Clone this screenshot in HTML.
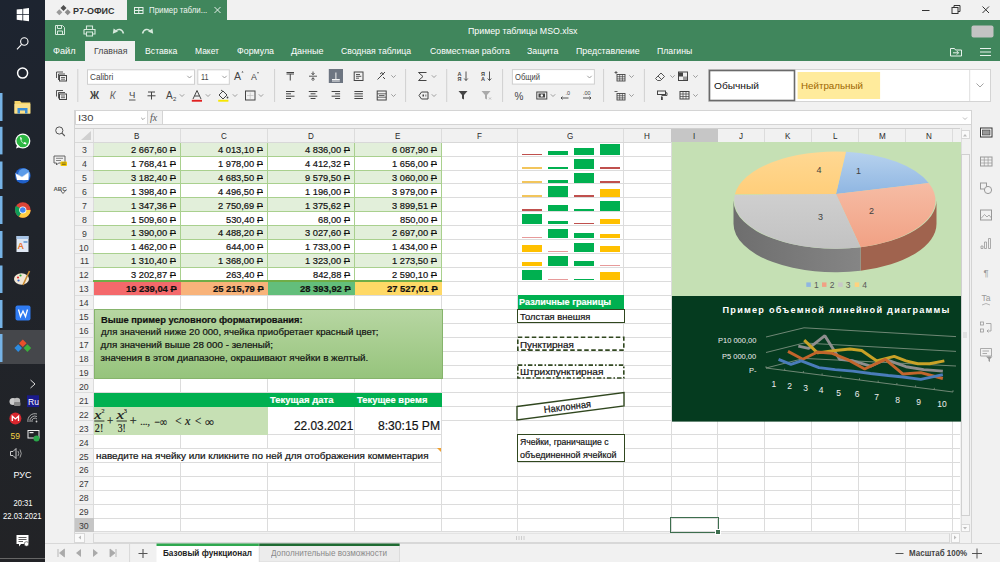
<!DOCTYPE html><html><head><meta charset="utf-8"><style>
*{margin:0;padding:0;box-sizing:border-box}
html,body{width:1000px;height:562px;overflow:hidden;background:#f1f1f1;font-family:"Liberation Sans",sans-serif}
.a{position:absolute}
.t{position:absolute;white-space:nowrap}
.k{-webkit-text-stroke:0.2px currentColor}
</style></head><body>
<div class="a" style="left:0px;top:0px;width:45px;height:562px;background:linear-gradient(#1d2430,#20242b 40%,#222326)"></div>
<div class="a" style="left:45px;top:0px;width:955px;height:20px;background:#f1f1f1"></div>
<div class="a" style="left:127px;top:0px;width:100px;height:20px;background:#40865c"></div>
<div class="a" style="left:45px;top:20px;width:955px;height:41px;background:#40865c"></div>
<div class="a" style="left:85px;top:41px;width:50px;height:20px;background:#f1f1f1"></div>
<div class="a" style="left:45px;top:61px;width:955px;height:49px;background:#f1f1f1"></div>
<div class="a" style="left:74.5px;top:110px;width:897px;height:15px;background:#fff;border:1px solid #d4d4d4"></div>
<div class="a" style="left:147px;top:110px;width:16px;height:15px;background:#f1f1f1;border:1px solid #d4d4d4"></div>
<div class="a" style="left:74px;top:110px;width:1px;height:433px;background:#d4d4d4"></div>
<div class="a" style="left:75px;top:128px;width:885px;height:404px;background:#fff"></div>
<div class="a" style="left:75px;top:128px;width:885px;height:14px;background:#f1f1f1"></div>
<div class="a" style="left:75px;top:142px;width:18.5px;height:390px;background:#f1f1f1"></div>
<div class="a" style="left:971px;top:110px;width:1px;height:433px;background:#d4d4d4"></div>
<div class="a" style="left:45px;top:543px;width:955px;height:1px;background:#d8d8d8"></div>
<svg class="a" style="left:0;top:0" width="1000" height="562"><line x1="93.5" y1="128" x2="93.5" y2="532" stroke="#dcdcdc"/><line x1="180.5" y1="128" x2="180.5" y2="532" stroke="#dcdcdc"/><line x1="267.5" y1="128" x2="267.5" y2="532" stroke="#dcdcdc"/><line x1="354.5" y1="128" x2="354.5" y2="532" stroke="#dcdcdc"/><line x1="441.5" y1="128" x2="441.5" y2="532" stroke="#dcdcdc"/><line x1="517.5" y1="128" x2="517.5" y2="532" stroke="#dcdcdc"/><line x1="623.5" y1="128" x2="623.5" y2="532" stroke="#dcdcdc"/><line x1="671.5" y1="128" x2="671.5" y2="532" stroke="#dcdcdc"/><line x1="717.5" y1="128" x2="717.5" y2="532" stroke="#dcdcdc"/><line x1="764.5" y1="128" x2="764.5" y2="532" stroke="#dcdcdc"/><line x1="811.5" y1="128" x2="811.5" y2="532" stroke="#dcdcdc"/><line x1="858.5" y1="128" x2="858.5" y2="532" stroke="#dcdcdc"/><line x1="905.5" y1="128" x2="905.5" y2="532" stroke="#dcdcdc"/><line x1="952.5" y1="128" x2="952.5" y2="532" stroke="#dcdcdc"/><line x1="75" y1="142.5" x2="960" y2="142.5" stroke="#dcdcdc"/><line x1="75" y1="156.5" x2="960" y2="156.5" stroke="#dcdcdc"/><line x1="75" y1="170.5" x2="960" y2="170.5" stroke="#dcdcdc"/><line x1="75" y1="183.5" x2="960" y2="183.5" stroke="#dcdcdc"/><line x1="75" y1="197.5" x2="960" y2="197.5" stroke="#dcdcdc"/><line x1="75" y1="211.5" x2="960" y2="211.5" stroke="#dcdcdc"/><line x1="75" y1="225.5" x2="960" y2="225.5" stroke="#dcdcdc"/><line x1="75" y1="239.5" x2="960" y2="239.5" stroke="#dcdcdc"/><line x1="75" y1="253.5" x2="960" y2="253.5" stroke="#dcdcdc"/><line x1="75" y1="267.5" x2="960" y2="267.5" stroke="#dcdcdc"/><line x1="75" y1="281.5" x2="960" y2="281.5" stroke="#dcdcdc"/><line x1="75" y1="295.5" x2="960" y2="295.5" stroke="#dcdcdc"/><line x1="75" y1="309.5" x2="960" y2="309.5" stroke="#dcdcdc"/><line x1="75" y1="323.5" x2="960" y2="323.5" stroke="#dcdcdc"/><line x1="75" y1="337.5" x2="960" y2="337.5" stroke="#dcdcdc"/><line x1="75" y1="351.5" x2="960" y2="351.5" stroke="#dcdcdc"/><line x1="75" y1="365.5" x2="960" y2="365.5" stroke="#dcdcdc"/><line x1="75" y1="378.5" x2="960" y2="378.5" stroke="#dcdcdc"/><line x1="75" y1="392.5" x2="960" y2="392.5" stroke="#dcdcdc"/><line x1="75" y1="406.5" x2="960" y2="406.5" stroke="#dcdcdc"/><line x1="75" y1="420.5" x2="960" y2="420.5" stroke="#dcdcdc"/><line x1="75" y1="434.5" x2="960" y2="434.5" stroke="#dcdcdc"/><line x1="75" y1="448.5" x2="960" y2="448.5" stroke="#dcdcdc"/><line x1="75" y1="462.5" x2="960" y2="462.5" stroke="#dcdcdc"/><line x1="75" y1="476.5" x2="960" y2="476.5" stroke="#dcdcdc"/><line x1="75" y1="490.5" x2="960" y2="490.5" stroke="#dcdcdc"/><line x1="75" y1="504.5" x2="960" y2="504.5" stroke="#dcdcdc"/><line x1="75" y1="518.5" x2="960" y2="518.5" stroke="#dcdcdc"/><line x1="75" y1="531.5" x2="960" y2="531.5" stroke="#dcdcdc"/></svg>
<div class="a" style="left:671px;top:128.5px;width:46.5px;height:13.5px;background:#c6c6c6"></div>
<div class="a" style="left:75px;top:128px;width:885px;height:1px;background:#d0d0d0"></div>
<div class="a" style="left:75px;top:517.5px;width:18.5px;height:14px;background:#c6c6c6"></div>
<div class="t " style="left:134.3px;top:131.58px;font-size:9px;line-height:9px;color:#2a2a2a;transform:scaleX(0.8982);transform-origin:0 0;">B</div>
<div class="t " style="left:221.08px;top:131.58px;font-size:9px;line-height:9px;color:#2a2a2a;transform:scaleX(0.9);transform-origin:0 0;">C</div>
<div class="t " style="left:308.08px;top:131.58px;font-size:9px;line-height:9px;color:#2a2a2a;transform:scaleX(0.9);transform-origin:0 0;">D</div>
<div class="t " style="left:395.3px;top:131.58px;font-size:9px;line-height:9px;color:#2a2a2a;transform:scaleX(0.8982);transform-origin:0 0;">E</div>
<div class="t " style="left:477.03px;top:131.58px;font-size:9px;line-height:9px;color:#2a2a2a;transform:scaleX(0.8995);transform-origin:0 0;">F</div>
<div class="t " style="left:567.35px;top:131.58px;font-size:9px;line-height:9px;color:#2a2a2a;transform:scaleX(0.898);transform-origin:0 0;">G</div>
<div class="t " style="left:644.33px;top:131.58px;font-size:9px;line-height:9px;color:#2a2a2a;transform:scaleX(0.9);transform-origin:0 0;">H</div>
<div class="t " style="left:693.12px;top:131.58px;font-size:9px;line-height:9px;color:#2a2a2a;transform:scaleX(0.8945);transform-origin:0 0;">I</div>
<div class="t " style="left:738.98px;top:131.58px;font-size:9px;line-height:9px;color:#2a2a2a;transform:scaleX(0.9);transform-origin:0 0;">J</div>
<div class="t " style="left:785.3px;top:131.58px;font-size:9px;line-height:9px;color:#2a2a2a;transform:scaleX(0.8982);transform-origin:0 0;">K</div>
<div class="t " style="left:832.75px;top:131.58px;font-size:9px;line-height:9px;color:#2a2a2a;transform:scaleX(0.8981);transform-origin:0 0;">L</div>
<div class="t " style="left:878.63px;top:131.58px;font-size:9px;line-height:9px;color:#2a2a2a;transform:scaleX(0.8996);transform-origin:0 0;">M</div>
<div class="t " style="left:925.83px;top:131.58px;font-size:9px;line-height:9px;color:#2a2a2a;transform:scaleX(0.9);transform-origin:0 0;">N</div>
<div class="t " style="left:81.82px;top:145.04px;font-size:9.4px;line-height:9.4px;color:#3a3a3a;transform:scaleX(0.9315);transform-origin:0 0;">3</div>
<div class="t " style="left:81.82px;top:158.97px;font-size:9.4px;line-height:9.4px;color:#3a3a3a;transform:scaleX(0.9315);transform-origin:0 0;">4</div>
<div class="t " style="left:81.82px;top:172.9px;font-size:9.4px;line-height:9.4px;color:#3a3a3a;transform:scaleX(0.9315);transform-origin:0 0;">5</div>
<div class="t " style="left:81.82px;top:186.83px;font-size:9.4px;line-height:9.4px;color:#3a3a3a;transform:scaleX(0.9315);transform-origin:0 0;">6</div>
<div class="t " style="left:81.82px;top:200.76px;font-size:9.4px;line-height:9.4px;color:#3a3a3a;transform:scaleX(0.9315);transform-origin:0 0;">7</div>
<div class="t " style="left:81.82px;top:214.69px;font-size:9.4px;line-height:9.4px;color:#3a3a3a;transform:scaleX(0.9315);transform-origin:0 0;">8</div>
<div class="t " style="left:81.82px;top:228.62px;font-size:9.4px;line-height:9.4px;color:#3a3a3a;transform:scaleX(0.9315);transform-origin:0 0;">9</div>
<div class="t " style="left:79.39px;top:242.55px;font-size:9.4px;line-height:9.4px;color:#3a3a3a;transform:scaleX(0.9315);transform-origin:0 0;">10</div>
<div class="t " style="left:79.71px;top:256.48px;font-size:9.4px;line-height:9.4px;color:#3a3a3a;transform:scaleX(0.9322);transform-origin:0 0;">11</div>
<div class="t " style="left:79.39px;top:270.41px;font-size:9.4px;line-height:9.4px;color:#3a3a3a;transform:scaleX(0.9315);transform-origin:0 0;">12</div>
<div class="t " style="left:79.39px;top:284.34px;font-size:9.4px;line-height:9.4px;color:#3a3a3a;transform:scaleX(0.9315);transform-origin:0 0;">13</div>
<div class="t " style="left:79.39px;top:298.27px;font-size:9.4px;line-height:9.4px;color:#3a3a3a;transform:scaleX(0.9315);transform-origin:0 0;">14</div>
<div class="t " style="left:79.39px;top:312.2px;font-size:9.4px;line-height:9.4px;color:#3a3a3a;transform:scaleX(0.9315);transform-origin:0 0;">15</div>
<div class="t " style="left:79.39px;top:326.13px;font-size:9.4px;line-height:9.4px;color:#3a3a3a;transform:scaleX(0.9315);transform-origin:0 0;">16</div>
<div class="t " style="left:79.39px;top:340.06px;font-size:9.4px;line-height:9.4px;color:#3a3a3a;transform:scaleX(0.9315);transform-origin:0 0;">17</div>
<div class="t " style="left:79.39px;top:353.99px;font-size:9.4px;line-height:9.4px;color:#3a3a3a;transform:scaleX(0.9315);transform-origin:0 0;">18</div>
<div class="t " style="left:79.39px;top:367.92px;font-size:9.4px;line-height:9.4px;color:#3a3a3a;transform:scaleX(0.9315);transform-origin:0 0;">19</div>
<div class="t " style="left:79.39px;top:381.85px;font-size:9.4px;line-height:9.4px;color:#3a3a3a;transform:scaleX(0.9315);transform-origin:0 0;">20</div>
<div class="t " style="left:79.39px;top:395.78px;font-size:9.4px;line-height:9.4px;color:#3a3a3a;transform:scaleX(0.9315);transform-origin:0 0;">21</div>
<div class="t " style="left:79.39px;top:409.71px;font-size:9.4px;line-height:9.4px;color:#3a3a3a;transform:scaleX(0.9315);transform-origin:0 0;">22</div>
<div class="t " style="left:79.39px;top:423.64px;font-size:9.4px;line-height:9.4px;color:#3a3a3a;transform:scaleX(0.9315);transform-origin:0 0;">23</div>
<div class="t " style="left:79.39px;top:437.57px;font-size:9.4px;line-height:9.4px;color:#3a3a3a;transform:scaleX(0.9315);transform-origin:0 0;">24</div>
<div class="t " style="left:79.39px;top:451.5px;font-size:9.4px;line-height:9.4px;color:#3a3a3a;transform:scaleX(0.9315);transform-origin:0 0;">25</div>
<div class="t " style="left:79.39px;top:465.43px;font-size:9.4px;line-height:9.4px;color:#3a3a3a;transform:scaleX(0.9315);transform-origin:0 0;">26</div>
<div class="t " style="left:79.39px;top:479.36px;font-size:9.4px;line-height:9.4px;color:#3a3a3a;transform:scaleX(0.9315);transform-origin:0 0;">27</div>
<div class="t " style="left:79.39px;top:493.29px;font-size:9.4px;line-height:9.4px;color:#3a3a3a;transform:scaleX(0.9315);transform-origin:0 0;">28</div>
<div class="t " style="left:79.39px;top:507.22px;font-size:9.4px;line-height:9.4px;color:#3a3a3a;transform:scaleX(0.9315);transform-origin:0 0;">29</div>
<div class="t " style="left:79.39px;top:521.15px;font-size:9.4px;line-height:9.4px;color:#3a3a3a;transform:scaleX(0.9315);transform-origin:0 0;">30</div>
<div class="a" style="left:93.5px;top:142.0px;width:348px;height:13.93px;background:#e2efda"></div>
<div class="a" style="left:93.5px;top:169.86px;width:348px;height:13.93px;background:#e2efda"></div>
<div class="a" style="left:93.5px;top:197.72px;width:348px;height:13.93px;background:#e2efda"></div>
<div class="a" style="left:93.5px;top:225.58px;width:348px;height:13.93px;background:#e2efda"></div>
<div class="a" style="left:93.5px;top:253.44px;width:348px;height:13.93px;background:#e2efda"></div>
<svg class="a" style="left:0;top:0" width="1000" height="562"><line x1="93" y1="156.5" x2="442" y2="156.5" stroke="#a9d08e"/><line x1="93" y1="170.5" x2="442" y2="170.5" stroke="#a9d08e"/><line x1="93" y1="183.5" x2="442" y2="183.5" stroke="#a9d08e"/><line x1="93" y1="197.5" x2="442" y2="197.5" stroke="#a9d08e"/><line x1="93" y1="211.5" x2="442" y2="211.5" stroke="#a9d08e"/><line x1="93" y1="225.5" x2="442" y2="225.5" stroke="#a9d08e"/><line x1="93" y1="239.5" x2="442" y2="239.5" stroke="#a9d08e"/><line x1="93" y1="253.5" x2="442" y2="253.5" stroke="#a9d08e"/><line x1="93" y1="267.5" x2="442" y2="267.5" stroke="#a9d08e"/><line x1="180.5" y1="142" x2="180.5" y2="295" stroke="#a9d08e"/><line x1="267.5" y1="142" x2="267.5" y2="295" stroke="#a9d08e"/><line x1="354.5" y1="142" x2="354.5" y2="295" stroke="#a9d08e"/><line x1="441.5" y1="142" x2="441.5" y2="295" stroke="#a9d08e"/><line x1="75" y1="142.5" x2="960" y2="142.5" stroke="#d8d8d8"/><line x1="93" y1="281.0" x2="442" y2="281.0" stroke="#70ad47" stroke-width="2"/></svg>
<div class="a" style="left:94.0px;top:282.3px;width:86.5px;height:12.93px;background:#f4696b"></div>
<div class="a" style="left:181.0px;top:282.3px;width:86.5px;height:12.93px;background:#f8b37a"></div>
<div class="a" style="left:268.0px;top:282.3px;width:86.5px;height:12.93px;background:#63be7b"></div>
<div class="a" style="left:355.0px;top:282.3px;width:86.5px;height:12.93px;background:#ffd966"></div>
<div class="t k" style="left:131.27px;top:144.9px;font-size:9.8px;line-height:9.8px;color:#111;transform:scaleX(0.9499);transform-origin:0 0;">2 667,60&nbsp;<span style="text-decoration:line-through;text-decoration-thickness:1px">P</span></div>
<div class="t k" style="left:218.27px;top:144.9px;font-size:9.8px;line-height:9.8px;color:#111;transform:scaleX(0.9499);transform-origin:0 0;">4 013,10&nbsp;<span style="text-decoration:line-through;text-decoration-thickness:1px">P</span></div>
<div class="t k" style="left:305.27px;top:144.9px;font-size:9.8px;line-height:9.8px;color:#111;transform:scaleX(0.9499);transform-origin:0 0;">4 836,00&nbsp;<span style="text-decoration:line-through;text-decoration-thickness:1px">P</span></div>
<div class="t k" style="left:392.27px;top:144.9px;font-size:9.8px;line-height:9.8px;color:#111;transform:scaleX(0.9499);transform-origin:0 0;">6 087,90&nbsp;<span style="text-decoration:line-through;text-decoration-thickness:1px">P</span></div>
<div class="t k" style="left:131.27px;top:158.83px;font-size:9.8px;line-height:9.8px;color:#111;transform:scaleX(0.9499);transform-origin:0 0;">1 768,41&nbsp;<span style="text-decoration:line-through;text-decoration-thickness:1px">P</span></div>
<div class="t k" style="left:218.27px;top:158.83px;font-size:9.8px;line-height:9.8px;color:#111;transform:scaleX(0.9499);transform-origin:0 0;">1 978,00&nbsp;<span style="text-decoration:line-through;text-decoration-thickness:1px">P</span></div>
<div class="t k" style="left:305.27px;top:158.83px;font-size:9.8px;line-height:9.8px;color:#111;transform:scaleX(0.9499);transform-origin:0 0;">4 412,32&nbsp;<span style="text-decoration:line-through;text-decoration-thickness:1px">P</span></div>
<div class="t k" style="left:392.27px;top:158.83px;font-size:9.8px;line-height:9.8px;color:#111;transform:scaleX(0.9499);transform-origin:0 0;">1 656,00&nbsp;<span style="text-decoration:line-through;text-decoration-thickness:1px">P</span></div>
<div class="t k" style="left:131.27px;top:172.76px;font-size:9.8px;line-height:9.8px;color:#111;transform:scaleX(0.9499);transform-origin:0 0;">3 182,40&nbsp;<span style="text-decoration:line-through;text-decoration-thickness:1px">P</span></div>
<div class="t k" style="left:218.27px;top:172.76px;font-size:9.8px;line-height:9.8px;color:#111;transform:scaleX(0.9499);transform-origin:0 0;">4 683,50&nbsp;<span style="text-decoration:line-through;text-decoration-thickness:1px">P</span></div>
<div class="t k" style="left:305.27px;top:172.76px;font-size:9.8px;line-height:9.8px;color:#111;transform:scaleX(0.9499);transform-origin:0 0;">9 579,50&nbsp;<span style="text-decoration:line-through;text-decoration-thickness:1px">P</span></div>
<div class="t k" style="left:392.27px;top:172.76px;font-size:9.8px;line-height:9.8px;color:#111;transform:scaleX(0.9499);transform-origin:0 0;">3 060,00&nbsp;<span style="text-decoration:line-through;text-decoration-thickness:1px">P</span></div>
<div class="t k" style="left:131.27px;top:186.69px;font-size:9.8px;line-height:9.8px;color:#111;transform:scaleX(0.9499);transform-origin:0 0;">1 398,40&nbsp;<span style="text-decoration:line-through;text-decoration-thickness:1px">P</span></div>
<div class="t k" style="left:218.27px;top:186.69px;font-size:9.8px;line-height:9.8px;color:#111;transform:scaleX(0.9499);transform-origin:0 0;">4 496,50&nbsp;<span style="text-decoration:line-through;text-decoration-thickness:1px">P</span></div>
<div class="t k" style="left:305.27px;top:186.69px;font-size:9.8px;line-height:9.8px;color:#111;transform:scaleX(0.9499);transform-origin:0 0;">1 196,00&nbsp;<span style="text-decoration:line-through;text-decoration-thickness:1px">P</span></div>
<div class="t k" style="left:392.27px;top:186.69px;font-size:9.8px;line-height:9.8px;color:#111;transform:scaleX(0.9499);transform-origin:0 0;">3 979,00&nbsp;<span style="text-decoration:line-through;text-decoration-thickness:1px">P</span></div>
<div class="t k" style="left:131.27px;top:200.62px;font-size:9.8px;line-height:9.8px;color:#111;transform:scaleX(0.9499);transform-origin:0 0;">1 347,36&nbsp;<span style="text-decoration:line-through;text-decoration-thickness:1px">P</span></div>
<div class="t k" style="left:218.27px;top:200.62px;font-size:9.8px;line-height:9.8px;color:#111;transform:scaleX(0.9499);transform-origin:0 0;">2 750,69&nbsp;<span style="text-decoration:line-through;text-decoration-thickness:1px">P</span></div>
<div class="t k" style="left:305.27px;top:200.62px;font-size:9.8px;line-height:9.8px;color:#111;transform:scaleX(0.9499);transform-origin:0 0;">1 375,62&nbsp;<span style="text-decoration:line-through;text-decoration-thickness:1px">P</span></div>
<div class="t k" style="left:392.27px;top:200.62px;font-size:9.8px;line-height:9.8px;color:#111;transform:scaleX(0.9499);transform-origin:0 0;">3 899,51&nbsp;<span style="text-decoration:line-through;text-decoration-thickness:1px">P</span></div>
<div class="t k" style="left:131.27px;top:214.55px;font-size:9.8px;line-height:9.8px;color:#111;transform:scaleX(0.9499);transform-origin:0 0;">1 509,60&nbsp;<span style="text-decoration:line-through;text-decoration-thickness:1px">P</span></div>
<div class="t k" style="left:226.03px;top:214.55px;font-size:9.8px;line-height:9.8px;color:#111;transform:scaleX(0.9499);transform-origin:0 0;">530,40&nbsp;<span style="text-decoration:line-through;text-decoration-thickness:1px">P</span></div>
<div class="t k" style="left:318.21px;top:214.55px;font-size:9.8px;line-height:9.8px;color:#111;transform:scaleX(0.9496);transform-origin:0 0;">68,00&nbsp;<span style="text-decoration:line-through;text-decoration-thickness:1px">P</span></div>
<div class="t k" style="left:400.03px;top:214.55px;font-size:9.8px;line-height:9.8px;color:#111;transform:scaleX(0.9499);transform-origin:0 0;">850,00&nbsp;<span style="text-decoration:line-through;text-decoration-thickness:1px">P</span></div>
<div class="t k" style="left:131.27px;top:228.48px;font-size:9.8px;line-height:9.8px;color:#111;transform:scaleX(0.9499);transform-origin:0 0;">1 390,00&nbsp;<span style="text-decoration:line-through;text-decoration-thickness:1px">P</span></div>
<div class="t k" style="left:218.27px;top:228.48px;font-size:9.8px;line-height:9.8px;color:#111;transform:scaleX(0.9499);transform-origin:0 0;">4 488,20&nbsp;<span style="text-decoration:line-through;text-decoration-thickness:1px">P</span></div>
<div class="t k" style="left:305.27px;top:228.48px;font-size:9.8px;line-height:9.8px;color:#111;transform:scaleX(0.9499);transform-origin:0 0;">3 027,60&nbsp;<span style="text-decoration:line-through;text-decoration-thickness:1px">P</span></div>
<div class="t k" style="left:392.27px;top:228.48px;font-size:9.8px;line-height:9.8px;color:#111;transform:scaleX(0.9499);transform-origin:0 0;">2 697,00&nbsp;<span style="text-decoration:line-through;text-decoration-thickness:1px">P</span></div>
<div class="t k" style="left:131.27px;top:242.41px;font-size:9.8px;line-height:9.8px;color:#111;transform:scaleX(0.9499);transform-origin:0 0;">1 462,00&nbsp;<span style="text-decoration:line-through;text-decoration-thickness:1px">P</span></div>
<div class="t k" style="left:226.03px;top:242.41px;font-size:9.8px;line-height:9.8px;color:#111;transform:scaleX(0.9499);transform-origin:0 0;">644,00&nbsp;<span style="text-decoration:line-through;text-decoration-thickness:1px">P</span></div>
<div class="t k" style="left:305.27px;top:242.41px;font-size:9.8px;line-height:9.8px;color:#111;transform:scaleX(0.9499);transform-origin:0 0;">1 733,00&nbsp;<span style="text-decoration:line-through;text-decoration-thickness:1px">P</span></div>
<div class="t k" style="left:392.27px;top:242.41px;font-size:9.8px;line-height:9.8px;color:#111;transform:scaleX(0.9499);transform-origin:0 0;">1 434,00&nbsp;<span style="text-decoration:line-through;text-decoration-thickness:1px">P</span></div>
<div class="t k" style="left:131.27px;top:256.34px;font-size:9.8px;line-height:9.8px;color:#111;transform:scaleX(0.9499);transform-origin:0 0;">1 310,40&nbsp;<span style="text-decoration:line-through;text-decoration-thickness:1px">P</span></div>
<div class="t k" style="left:218.27px;top:256.34px;font-size:9.8px;line-height:9.8px;color:#111;transform:scaleX(0.9499);transform-origin:0 0;">1 368,00&nbsp;<span style="text-decoration:line-through;text-decoration-thickness:1px">P</span></div>
<div class="t k" style="left:305.27px;top:256.34px;font-size:9.8px;line-height:9.8px;color:#111;transform:scaleX(0.9499);transform-origin:0 0;">1 323,00&nbsp;<span style="text-decoration:line-through;text-decoration-thickness:1px">P</span></div>
<div class="t k" style="left:392.27px;top:256.34px;font-size:9.8px;line-height:9.8px;color:#111;transform:scaleX(0.9499);transform-origin:0 0;">1 273,50&nbsp;<span style="text-decoration:line-through;text-decoration-thickness:1px">P</span></div>
<div class="t k" style="left:131.27px;top:270.27px;font-size:9.8px;line-height:9.8px;color:#111;transform:scaleX(0.9499);transform-origin:0 0;">3 202,87&nbsp;<span style="text-decoration:line-through;text-decoration-thickness:1px">P</span></div>
<div class="t k" style="left:226.03px;top:270.27px;font-size:9.8px;line-height:9.8px;color:#111;transform:scaleX(0.9499);transform-origin:0 0;">263,40&nbsp;<span style="text-decoration:line-through;text-decoration-thickness:1px">P</span></div>
<div class="t k" style="left:313.03px;top:270.27px;font-size:9.8px;line-height:9.8px;color:#111;transform:scaleX(0.9499);transform-origin:0 0;">842,88&nbsp;<span style="text-decoration:line-through;text-decoration-thickness:1px">P</span></div>
<div class="t k" style="left:392.27px;top:270.27px;font-size:9.8px;line-height:9.8px;color:#111;transform:scaleX(0.9499);transform-origin:0 0;">2 590,10&nbsp;<span style="text-decoration:line-through;text-decoration-thickness:1px">P</span></div>
<div class="t k" style="left:125.56px;top:284.2px;font-size:9.8px;line-height:9.8px;color:#111;font-weight:bold;transform:scaleX(0.9599);transform-origin:0 0;">19 239,04&nbsp;<span style="text-decoration:line-through;text-decoration-thickness:1px">P</span></div>
<div class="t k" style="left:212.56px;top:284.2px;font-size:9.8px;line-height:9.8px;color:#111;font-weight:bold;transform:scaleX(0.9599);transform-origin:0 0;">25 215,79&nbsp;<span style="text-decoration:line-through;text-decoration-thickness:1px">P</span></div>
<div class="t k" style="left:299.56px;top:284.2px;font-size:9.8px;line-height:9.8px;color:#111;font-weight:bold;transform:scaleX(0.9599);transform-origin:0 0;">28 393,92&nbsp;<span style="text-decoration:line-through;text-decoration-thickness:1px">P</span></div>
<div class="t k" style="left:386.56px;top:284.2px;font-size:9.8px;line-height:9.8px;color:#111;font-weight:bold;transform:scaleX(0.9599);transform-origin:0 0;">27 527,01&nbsp;<span style="text-decoration:line-through;text-decoration-thickness:1px">P</span></div>
<div class="a" style="left:93.5px;top:309px;width:349.5px;height:69.8px;background:linear-gradient(#b7d6a2,#96c47c);border:1px solid #86b46c"></div>
<div class="t k" style="left:100.5px;top:314.5px;font-size:9.8px;line-height:9.8px;color:#111;font-weight:bold;transform:scaleX(0.949);transform-origin:0 0;">Выше пример условного форматирования:</div>
<div class="t k" style="left:100.5px;top:327.4px;font-size:9.8px;line-height:9.8px;color:#111;transform:scaleX(0.9805);transform-origin:0 0;">для значений ниже 20 000, ячейка приобретает красный цвет;</div>
<div class="t k" style="left:100.5px;top:340.3px;font-size:9.8px;line-height:9.8px;color:#111;">для значений выше 28 000 - зеленый;</div>
<div class="t k" style="left:100.5px;top:353.2px;font-size:9.8px;line-height:9.8px;color:#111;">значения в этом диапазоне, окрашивают ячейки в желтый.</div>
<div class="a" style="left:93.5px;top:392.74px;width:348.5px;height:13.93px;background:#00b050"></div>
<div class="t k" style="left:269.6px;top:395.04px;font-size:9.8px;line-height:9.8px;color:#fff;font-weight:bold;transform:scaleX(0.9682);transform-origin:0 0;">Текущая дата</div>
<div class="t k" style="left:357px;top:395.04px;font-size:9.8px;line-height:9.8px;color:#fff;font-weight:bold;transform:scaleX(0.958);transform-origin:0 0;">Текущее время</div>
<div class="a" style="left:93.5px;top:406.67px;width:174.5px;height:27.86px;background:#c6e0b4"></div>
<div class="a" style="left:268px;top:406.67px;width:86px;height:26.86px;background:#fff"></div>
<div class="a" style="left:355px;top:406.67px;width:86px;height:26.86px;background:#fff"></div>
<div class="a" style="left:94px;top:449.26px;width:347px;height:12.33px;background:#fff"></div>
<div class="a" style="left:442px;top:421px;width:75px;height:55px;background:#fff"></div>
<div class="t k" style="left:293.7px;top:418.9px;font-size:13px;line-height:13px;color:#111;transform:scaleX(0.9112);transform-origin:0 0;">22.03.2021</div>
<div class="t k" style="left:378px;top:418.9px;font-size:13px;line-height:13px;color:#111;transform:scaleX(0.9323);transform-origin:0 0;">8:30:15 PM</div>
<svg class="a" style="left:0;top:0" width="1000" height="562"><text x="94.3" y="418.8" font-size="13.5" font-family="Liberation Serif" font-style="italic" font-weight="normal" fill="#1a1a1a" textLength="7.2" lengthAdjust="spacingAndGlyphs" stroke="#1a1a1a" stroke-width="0.2">x</text><text x="101.6" y="413.4" font-size="7" font-family="Liberation Serif" font-weight="normal" fill="#1a1a1a" textLength="3.0" lengthAdjust="spacingAndGlyphs" stroke="#1a1a1a" stroke-width="0.2">2</text><line x1="94.3" y1="421" x2="104.4" y2="421" stroke="#1a1a1a" stroke-width="0.9"/><text x="94.8" y="431.7" font-size="11.5" font-family="Liberation Serif" font-weight="normal" fill="#1a1a1a" textLength="8.5" lengthAdjust="spacingAndGlyphs" stroke="#1a1a1a" stroke-width="0.2">2!</text><text x="106.9" y="425.2" font-size="11.5" font-family="Liberation Serif" font-weight="normal" fill="#1a1a1a" textLength="6.3" lengthAdjust="spacingAndGlyphs" stroke="#1a1a1a" stroke-width="0.2">+</text><text x="116.4" y="418.8" font-size="13.5" font-family="Liberation Serif" font-style="italic" font-weight="normal" fill="#1a1a1a" textLength="7.6" lengthAdjust="spacingAndGlyphs" stroke="#1a1a1a" stroke-width="0.2">x</text><text x="124.1" y="413.4" font-size="7" font-family="Liberation Serif" font-weight="normal" fill="#1a1a1a" textLength="2.9" lengthAdjust="spacingAndGlyphs" stroke="#1a1a1a" stroke-width="0.2">3</text><line x1="116.6" y1="421" x2="126.9" y2="421" stroke="#1a1a1a" stroke-width="0.9"/><text x="117.7" y="431.7" font-size="11.5" font-family="Liberation Serif" font-weight="normal" fill="#1a1a1a" textLength="8.1" lengthAdjust="spacingAndGlyphs" stroke="#1a1a1a" stroke-width="0.2">3!</text><text x="129.7" y="425.2" font-size="11.5" font-family="Liberation Serif" font-weight="normal" fill="#1a1a1a" textLength="6.9" lengthAdjust="spacingAndGlyphs" stroke="#1a1a1a" stroke-width="0.2">+</text><text x="140.2" y="425" font-size="10" font-family="Liberation Serif" font-weight="normal" fill="#1a1a1a" textLength="9.8" lengthAdjust="spacingAndGlyphs" stroke="#1a1a1a" stroke-width="0.2">...,</text><text x="154.5" y="425.5" font-size="12" font-family="Liberation Serif" font-weight="normal" fill="#1a1a1a" textLength="12.6" lengthAdjust="spacingAndGlyphs" stroke="#1a1a1a" stroke-width="0.2">−∞</text><text x="175.2" y="425.2" font-size="11.5" font-family="Liberation Serif" font-weight="normal" fill="#1a1a1a" textLength="6.3" lengthAdjust="spacingAndGlyphs" stroke="#1a1a1a" stroke-width="0.2">&lt;</text><text x="185.1" y="424.8" font-size="13.5" font-family="Liberation Serif" font-style="italic" font-weight="normal" fill="#1a1a1a" textLength="5.4" lengthAdjust="spacingAndGlyphs" stroke="#1a1a1a" stroke-width="0.2">x</text><text x="195" y="425.2" font-size="11.5" font-family="Liberation Serif" font-weight="normal" fill="#1a1a1a" textLength="6.3" lengthAdjust="spacingAndGlyphs" stroke="#1a1a1a" stroke-width="0.2">&lt;</text><text x="204.9" y="425.5" font-size="12" font-family="Liberation Serif" font-weight="normal" fill="#1a1a1a" textLength="9.0" lengthAdjust="spacingAndGlyphs" stroke="#1a1a1a" stroke-width="0.2">∞</text></svg>
<div class="t k" style="left:95.5px;top:450.76px;font-size:9.8px;line-height:9.8px;color:#111;transform:scaleX(1.0099);transform-origin:0 0;">наведите на ячейку или кликните по ней для отображения комментария</div>
<svg class="a" style="left:436px;top:448.46px" width="6" height="6"><polygon points="1,0 5,0 5,4" fill="#f0a030"/></svg>
<div class="a" style="left:522px;top:153.53px;width:20px;height:1.3px;background:#c0504d"></div>
<div class="a" style="left:548px;top:150.83px;width:20px;height:4px;background:#00b050"></div>
<div class="a" style="left:574.2px;top:148.13px;width:20px;height:6.7px;background:#00b050"></div>
<div class="a" style="left:600px;top:144.13px;width:20px;height:10.7px;background:#00b050"></div>
<div class="a" style="left:522px;top:167.46px;width:20px;height:1.3px;background:#f2c55c"></div>
<div class="a" style="left:548px;top:167.46px;width:20px;height:1.3px;background:#00b050"></div>
<div class="a" style="left:574.2px;top:158.76px;width:20px;height:10px;background:#00b050"></div>
<div class="a" style="left:600px;top:167.46px;width:20px;height:1.3px;background:#c0504d"></div>
<div class="a" style="left:522px;top:181.39px;width:20px;height:1.3px;background:#f2c55c"></div>
<div class="a" style="left:548px;top:179.69px;width:20px;height:3px;background:#00b050"></div>
<div class="a" style="left:574.2px;top:172.69px;width:20px;height:10px;background:#00b050"></div>
<div class="a" style="left:600px;top:181.39px;width:20px;height:1.3px;background:#c0504d"></div>
<div class="a" style="left:522px;top:195.32px;width:20px;height:1.3px;background:#f2c55c"></div>
<div class="a" style="left:548px;top:185.92px;width:20px;height:10.7px;background:#00b050"></div>
<div class="a" style="left:574.2px;top:195.32px;width:20px;height:1.3px;background:#c0504d"></div>
<div class="a" style="left:600px;top:188.62px;width:20px;height:8px;background:#ffc000"></div>
<div class="a" style="left:522px;top:209.25px;width:20px;height:1.3px;background:#c0504d"></div>
<div class="a" style="left:548px;top:204.55px;width:20px;height:6px;background:#00b050"></div>
<div class="a" style="left:574.2px;top:209.25px;width:20px;height:1.3px;background:#00b050"></div>
<div class="a" style="left:600px;top:200.55px;width:20px;height:10px;background:#00b050"></div>
<div class="a" style="left:522px;top:214.48px;width:20px;height:10px;background:#00b050"></div>
<div class="a" style="left:548px;top:221.18px;width:20px;height:3.3px;background:#00b050"></div>
<div class="a" style="left:574.2px;top:223.18px;width:20px;height:1.3px;background:#c0504d"></div>
<div class="a" style="left:600px;top:219.28px;width:20px;height:5.2px;background:#ffc000"></div>
<div class="a" style="left:522px;top:237.11px;width:20px;height:1.3px;background:#e79a9a"></div>
<div class="a" style="left:548px;top:228.71px;width:20px;height:9.7px;background:#00b050"></div>
<div class="a" style="left:574.2px;top:233.41px;width:20px;height:5px;background:#00b050"></div>
<div class="a" style="left:600px;top:234.41px;width:20px;height:4px;background:#ffc000"></div>
<div class="a" style="left:522px;top:244.84px;width:20px;height:7.5px;background:#ffc000"></div>
<div class="a" style="left:548px;top:251.04px;width:20px;height:1.3px;background:#e79a9a"></div>
<div class="a" style="left:574.2px;top:242.84px;width:20px;height:9.5px;background:#00b050"></div>
<div class="a" style="left:600px;top:245.94px;width:20px;height:6.4px;background:#ffc000"></div>
<div class="a" style="left:522px;top:262.27px;width:20px;height:4px;background:#ffc000"></div>
<div class="a" style="left:548px;top:255.57px;width:20px;height:10.7px;background:#00b050"></div>
<div class="a" style="left:574.2px;top:260.97px;width:20px;height:5.3px;background:#00b050"></div>
<div class="a" style="left:600px;top:264.97px;width:20px;height:1.3px;background:#e79a9a"></div>
<div class="a" style="left:522px;top:269.8px;width:20px;height:10.4px;background:#00b050"></div>
<div class="a" style="left:548px;top:278.9px;width:20px;height:1.3px;background:#e79a9a"></div>
<div class="a" style="left:574.2px;top:278.5px;width:20px;height:1.7px;background:#00b050"></div>
<div class="a" style="left:600px;top:272.2px;width:20px;height:8px;background:#ffc000"></div>
<div class="a" style="left:517.5px;top:295.23px;width:106.5px;height:13.93px;background:#00b050"></div>
<div class="t k" style="left:519.3px;top:297.33px;font-size:9.8px;line-height:9.8px;color:#fff;font-weight:bold;transform:scaleX(0.9307);transform-origin:0 0;">Различные границы</div>
<div class="a" style="left:517px;top:308.66px;width:107.5px;height:14.43px;border:1.8px solid #30471f;background:#fff"></div>
<div class="t k" style="left:519.8px;top:311.66px;font-size:9.8px;line-height:9.8px;color:#111;transform:scaleX(0.9584);transform-origin:0 0;">Толстая внешяя</div>
<svg class="a" style="left:0;top:0" width="1000" height="562"><rect x="517.8" y="337.22" width="106" height="12.93" fill="#fff" stroke="#30471f" stroke-width="1.6" stroke-dasharray="4.5,2.5"/><rect x="517.8" y="365.08" width="106" height="12.93" fill="#fff" stroke="#30471f" stroke-width="1.6" stroke-dasharray="4.5,2,1.6,2"/><polygon points="517,406.5 624,392.5 624,406 517,420" fill="#fff" stroke="#30471f" stroke-width="1.4"/></svg>
<div class="t k" style="left:519.5px;top:339.52px;font-size:9.8px;line-height:9.8px;color:#111;transform:scaleX(1.0088);transform-origin:0 0;">Пунктирная</div>
<div class="t k" style="left:519.5px;top:367.38px;font-size:9.8px;line-height:9.8px;color:#111;transform:scaleX(1.0312);transform-origin:0 0;">Штрихпунктирная</div>
<div class="t k" style="left:544px;top:405px;font-size:9.8px;line-height:10px;color:#111;transform:rotate(-7deg) scaleX(0.95);transform-origin:0 50%">Наклонная</div>
<div class="a" style="left:517px;top:434.03px;width:107.5px;height:28.36px;border:1.5px solid #30471f;background:#fff"></div>
<div class="t k" style="left:519.5px;top:437.2px;font-size:9.8px;line-height:9.8px;color:#111;transform:scaleX(0.8779);transform-origin:0 0;">Ячейки, граничащие с</div>
<div class="t k" style="left:519.5px;top:450.2px;font-size:9.8px;line-height:9.8px;color:#111;transform:scaleX(0.9169);transform-origin:0 0;">объединенной ячейкой</div>
<svg class="a" style="left:0;top:0" width="1000" height="562" font-family="Liberation Sans"><defs><linearGradient id="g1" x1="0" y1="0" x2="0" y2="1"><stop offset="0" stop-color="#b7d2ee"/><stop offset="1" stop-color="#8fb6e2"/></linearGradient><linearGradient id="g2" x1="0" y1="0" x2="0" y2="1"><stop offset="0" stop-color="#f6bca4"/><stop offset="1" stop-color="#f1a184"/></linearGradient><linearGradient id="g3" x1="0" y1="0" x2="0" y2="1"><stop offset="0" stop-color="#cfcfcf"/><stop offset="1" stop-color="#c2c2c2"/></linearGradient><linearGradient id="g4" x1="0" y1="0" x2="0" y2="1"><stop offset="0" stop-color="#ffd893"/><stop offset="1" stop-color="#ffce7a"/></linearGradient><linearGradient id="gs" x1="0" y1="0" x2="1" y2="0"><stop offset="0" stop-color="#6e6e6e"/><stop offset="1" stop-color="#858585"/></linearGradient></defs><rect x="672" y="142" width="289" height="154" fill="#c5e0b4"/><path d="M936.5,200.2 L936.5,223.7 A101.5,48.5 0 0 1 860.6,270.7 L860.6,247.2 A101.5,48.5 0 0 0 936.5,200.2 Z" fill="#a0634e"/><path d="M860.6,247.2 L860.6,270.7 A101.5,48.5 0 0 1 733.5,223.7 L733.5,200.2 A101.5,48.5 0 0 0 860.6,247.2 Z" fill="url(#gs)"/><path d="M836,194 L846,151.7 A101.5,48.5 0 0 1 928.7,183 Z" fill="url(#g1)"/><path d="M836,194 L928.7,183 A101.5,48.5 0 0 1 860.6,247.2 Z" fill="url(#g2)"/><path d="M836,194 L860.6,247.2 A101.5,48.5 0 0 1 735,194.3 Z" fill="url(#g3)"/><path d="M836,194 L735,194.3 A101.5,48.5 0 0 1 846,151.7 Z" fill="url(#g4)"/><text x="858.5" y="174.39999999999998" font-size="9" fill="#404040" text-anchor="middle">1</text><text x="871.6" y="214.2" font-size="9" fill="#404040" text-anchor="middle">2</text><text x="820.5" y="219.6" font-size="9" fill="#404040" text-anchor="middle">3</text><text x="819" y="173.0" font-size="9" fill="#404040" text-anchor="middle">4</text><rect x="806.3" y="282.4" width="4.5" height="4.5" fill="#8fb6e2"/><text x="816.3" y="287.6" font-size="8.5" fill="#595959" text-anchor="middle">1</text><rect x="822" y="282.4" width="4.5" height="4.5" fill="#f1a184"/><text x="832" y="287.6" font-size="8.5" fill="#595959" text-anchor="middle">2</text><rect x="838.2" y="282.4" width="4.5" height="4.5" fill="#c8c8c8"/><text x="848.2" y="287.6" font-size="8.5" fill="#595959" text-anchor="middle">3</text><rect x="854.7" y="282.4" width="4.5" height="4.5" fill="#ffd27f"/><text x="864.7" y="287.6" font-size="8.5" fill="#595959" text-anchor="middle">4</text><rect x="672" y="296" width="289" height="125.6" fill="#053b1f"/><polyline points="766,337 804,327.8 956,336.6" fill="none" stroke="#8a9a8a" stroke-width="0.8"/><polyline points="766,352.5 804,343 956,351.4" fill="none" stroke="#8a9a8a" stroke-width="0.8"/><polyline points="766,368 804,358.4 956,366" fill="none" stroke="#8a9a8a" stroke-width="0.8"/><line x1="766" y1="368" x2="953" y2="392" stroke="#8a9a8a" stroke-width="0.8"/><line x1="766.0" y1="368.0" x2="766.0" y2="366.2" stroke="#8a9a8a" stroke-width="0.7"/><line x1="784.7" y1="370.4" x2="784.7" y2="368.6" stroke="#8a9a8a" stroke-width="0.7"/><line x1="803.4" y1="372.8" x2="803.4" y2="371.0" stroke="#8a9a8a" stroke-width="0.7"/><line x1="822.1" y1="375.2" x2="822.1" y2="373.4" stroke="#8a9a8a" stroke-width="0.7"/><line x1="840.8" y1="377.6" x2="840.8" y2="375.8" stroke="#8a9a8a" stroke-width="0.7"/><line x1="859.5" y1="380.0" x2="859.5" y2="378.2" stroke="#8a9a8a" stroke-width="0.7"/><line x1="878.2" y1="382.4" x2="878.2" y2="380.6" stroke="#8a9a8a" stroke-width="0.7"/><line x1="896.9" y1="384.8" x2="896.9" y2="383.0" stroke="#8a9a8a" stroke-width="0.7"/><line x1="915.6" y1="387.2" x2="915.6" y2="385.4" stroke="#8a9a8a" stroke-width="0.7"/><line x1="934.3" y1="389.6" x2="934.3" y2="387.8" stroke="#8a9a8a" stroke-width="0.7"/><line x1="953.0" y1="392.0" x2="953.0" y2="390.2" stroke="#8a9a8a" stroke-width="0.7"/><polyline points="798.32,346.05 808.64,348.41 824.87,335.72 839.62,359.32 852.89,360.8 870.59,366.11 885.34,359.32 905.99,366.7 923.69,369.65 942.86,371.12" fill="none" stroke="#8e8e8e" stroke-width="2.9" stroke-linejoin="bevel"/><polyline points="804.22,340.15 817.49,352.83 835.19,350.47 849.94,349.0 861.74,350.47 876.49,360.8 894.19,356.37 905.99,360.8 917.79,363.75 929.59,363.75 944.34,360.8" fill="none" stroke="#c9a227" stroke-width="2.9" stroke-linejoin="bevel"/><polyline points="787.99,351.36 802.74,359.32 817.49,351.95 832.24,353.42 846.99,359.32 864.69,369.06 885.34,359.32 903.04,374.07 920.74,372.6 942.86,378.5" fill="none" stroke="#c2652c" stroke-width="2.9" stroke-linejoin="bevel"/><polyline points="778.55,359.32 790.94,364.34 801.27,360.8 818.97,367.58 835.19,369.65 852.89,371.12 870.59,373.48 888.29,375.55 903.04,377.02 920.74,379.38 942.86,374.66" fill="none" stroke="#4a7cba" stroke-width="2.9" stroke-linejoin="bevel"/></svg>
<div class="t" style="left:722.5px;top:305px;font-size:9.2px;line-height:10px;font-weight:bold;color:#fff;letter-spacing:1.22px">Пример объемной линейной диаграммы</div>
<div class="t " style="left:717.64px;top:336.93px;font-size:8px;line-height:8px;color:#eee;transform:scaleX(0.9372);transform-origin:0 0;">P10 000,00</div>
<div class="t " style="left:721.81px;top:352.63px;font-size:8px;line-height:8px;color:#eee;transform:scaleX(0.9372);transform-origin:0 0;">P5 000,00</div>
<div class="t " style="left:748.5px;top:367.23px;font-size:8px;line-height:8px;color:#eee;transform:scaleX(0.9375);transform-origin:0 0;">P-</div>
<div class="t " style="left:771.43px;top:379.6px;font-size:8.5px;line-height:8.5px;color:#eee;">1</div>
<div class="t " style="left:787.13px;top:381.6px;font-size:8.5px;line-height:8.5px;color:#eee;">2</div>
<div class="t " style="left:803.23px;top:384.2px;font-size:8.5px;line-height:8.5px;color:#eee;">3</div>
<div class="t " style="left:818.63px;top:385.8px;font-size:8.5px;line-height:8.5px;color:#eee;">4</div>
<div class="t " style="left:836.23px;top:388.8px;font-size:8.5px;line-height:8.5px;color:#eee;">5</div>
<div class="t " style="left:854.63px;top:390.3px;font-size:8.5px;line-height:8.5px;color:#eee;">6</div>
<div class="t " style="left:874.13px;top:392.8px;font-size:8.5px;line-height:8.5px;color:#eee;">7</div>
<div class="t " style="left:895.13px;top:395.8px;font-size:8.5px;line-height:8.5px;color:#eee;">8</div>
<div class="t " style="left:916.13px;top:398.3px;font-size:8.5px;line-height:8.5px;color:#eee;">9</div>
<div class="t " style="left:937.27px;top:399.8px;font-size:8.5px;line-height:8.5px;color:#eee;">10</div>
<svg class="a" style="left:0;top:0" width="1000" height="110"><polygon points="63.5,5 66.5,8 63.5,11 60.5,8" fill="#505050"/><polygon points="59.3,9.2 62.3,12.2 59.3,15.2 56.3,12.2" fill="#9a9a9a"/><polygon points="67.7,9.2 70.7,12.2 67.7,15.2 64.7,12.2" fill="#8a8a8a"/><rect x="134.5" y="7.5" width="8.5" height="6" fill="none" stroke="#e6f0ea" stroke-width="1"/><line x1="134.5" y1="10.5" x2="143" y2="10.5" stroke="#e6f0ea"/><line x1="138.75" y1="7.5" x2="138.75" y2="13.5" stroke="#e6f0ea"/><path d="M214.5,7 L220.5,13 M220.5,7 L214.5,13" stroke="#e6f0ea" stroke-width="1"/><line x1="922" y1="10.5" x2="929.5" y2="10.5" stroke="#333" stroke-width="1"/><rect x="952" y="7.5" width="6" height="6" fill="none" stroke="#333"/><path d="M954,7.5 V5.5 H960 V11.5 H958" fill="none" stroke="#333"/><path d="M982.5,6.5 L989,13 M989,6.5 L982.5,13" stroke="#333" stroke-width="1"/><path d="M55.5,25.5 H62.5 L64.5,27.5 V34.5 H55.5 Z M57.5,25.5 V28.5 H61.5 V25.5 M57.5,34.5 V31 H62.5 V34.5" fill="none" stroke="#d6e9dc" stroke-width="1"/><path d="M86.5,29.5 V26 H92.5 V29.5 M84,29.5 H95 V34 H92.5 M86.5,34 H84 V29.5 M86.5,32 H92.5 V36 H86.5 Z" fill="none" stroke="#d6e9dc" stroke-width="1.1"/><path d="M116,31 C118,28.5 122,28.8 123.5,33.5" fill="none" stroke="#d6e9dc" stroke-width="1.5"/><polygon points="112.8,33.8 113.6,28.6 118,31.6" fill="#d6e9dc"/><path d="M150,31 C148,28.5 144,28.8 142.5,33.5" fill="none" stroke="#d6e9dc" stroke-width="1.5"/><polygon points="153.2,33.8 152.4,28.6 148,31.6" fill="#d6e9dc"/><rect x="971.5" y="25.5" width="22" height="12" rx="2" fill="#c3c3c3"/><path d="M950.5,48.5 H954.5 L955.5,50 H961.5 V56 H950.5 Z M953,52.8 H958.5 M956.8,51 L958.5,52.8 L956.8,54.6" fill="none" stroke="#e8f2ec" stroke-width="1"/><path d="M980,48.5 H991 M980,52 H991 M980,55.5 H991" stroke="#e8f2ec" stroke-width="1.1"/></svg>
<div class="t " style="left:72.6px;top:5.57px;font-size:9.6px;line-height:9.6px;color:#333;font-weight:bold;transform:scaleX(0.9323);transform-origin:0 0;">Р7-ОФИС</div>
<div class="t " style="left:148.7px;top:6.05px;font-size:8.8px;line-height:8.8px;color:#eef5f0;transform:scaleX(0.8933);transform-origin:0 0;">Пример табли...</div>
<div class="t " style="left:467.5px;top:26.88px;font-size:9px;line-height:9px;color:#fff;transform:scaleX(0.9786);transform-origin:0 0;">Пример таблицы MSO.xlsx</div>
<div class="t " style="left:53.4px;top:47.18px;font-size:9px;line-height:9px;color:#fff;transform:scaleX(1.0207);transform-origin:0 0;">Файл</div>
<div class="t " style="left:93.6px;top:47.18px;font-size:9px;line-height:9px;color:#444;transform:scaleX(0.9747);transform-origin:0 0;">Главная</div>
<div class="t " style="left:144.7px;top:47.18px;font-size:9px;line-height:9px;color:#fff;transform:scaleX(0.9655);transform-origin:0 0;">Вставка</div>
<div class="t " style="left:195px;top:47.18px;font-size:9px;line-height:9px;color:#fff;transform:scaleX(0.9418);transform-origin:0 0;">Макет</div>
<div class="t " style="left:237px;top:47.18px;font-size:9px;line-height:9px;color:#fff;transform:scaleX(0.9814);transform-origin:0 0;">Формула</div>
<div class="t " style="left:291px;top:47.18px;font-size:9px;line-height:9px;color:#fff;">Данные</div>
<div class="t " style="left:341px;top:47.18px;font-size:9px;line-height:9px;color:#fff;transform:scaleX(0.9614);transform-origin:0 0;">Сводная таблица</div>
<div class="t " style="left:430px;top:47.18px;font-size:9px;line-height:9px;color:#fff;transform:scaleX(0.9689);transform-origin:0 0;">Совместная работа</div>
<div class="t " style="left:527px;top:47.18px;font-size:9px;line-height:9px;color:#fff;transform:scaleX(0.981);transform-origin:0 0;">Защита</div>
<div class="t " style="left:575.6px;top:47.18px;font-size:9px;line-height:9px;color:#fff;transform:scaleX(0.9814);transform-origin:0 0;">Представление</div>
<div class="t " style="left:656.5px;top:47.18px;font-size:9px;line-height:9px;color:#fff;transform:scaleX(0.9675);transform-origin:0 0;">Плагины</div>
<svg class="a" style="left:0;top:0" width="1000" height="110" font-family="Liberation Sans"><path d="M56.5,78 V72 H63 M58.5,80 V74 H65 " fill="none" stroke="#444" stroke-width="0.9"/><rect x="59.5" y="75.5" width="7" height="5.5" fill="none" stroke="#444" stroke-width="1"/><path d="M61,77.5 H65 M61,79.2 H65" stroke="#444" stroke-width="0.8"/><path d="M56.5,96.5 V90.5 H63 M58.5,98.5 V92.5 H65 " fill="none" stroke="#444" stroke-width="0.9"/><rect x="59.5" y="94.0" width="7" height="5.5" fill="none" stroke="#444" stroke-width="1"/><path d="M61,96.0 H65 M61,97.7 H65" stroke="#444" stroke-width="0.8"/><line x1="77.8" y1="69" x2="77.8" y2="102" stroke="#d0d0d0" stroke-width="1"/><line x1="274.6" y1="69" x2="274.6" y2="102" stroke="#d0d0d0" stroke-width="1"/><line x1="405.6" y1="69" x2="405.6" y2="102" stroke="#d0d0d0" stroke-width="1"/><line x1="446.7" y1="69" x2="446.7" y2="102" stroke="#d0d0d0" stroke-width="1"/><line x1="502.6" y1="69" x2="502.6" y2="102" stroke="#d0d0d0" stroke-width="1"/><line x1="603.6" y1="69" x2="603.6" y2="102" stroke="#d0d0d0" stroke-width="1"/><line x1="644.4" y1="69" x2="644.4" y2="102" stroke="#d0d0d0" stroke-width="1"/><rect x="87.5" y="69.8" width="107" height="14.5" fill="#fff" stroke="#cfcfcf"/><rect x="197.8" y="69.8" width="31.5" height="14.5" fill="#fff" stroke="#cfcfcf"/><path d="M187.3,75.8 L189.5,78 L191.7,75.8" fill="none" stroke="#888" stroke-width="0.8"/><path d="M222.3,75.8 L224.5,78 L226.7,75.8" fill="none" stroke="#888" stroke-width="0.8"/><rect x="512.4" y="69.6" width="82" height="14.5" fill="#fff" stroke="#cfcfcf"/><path d="M587.3,75.8 L589.5,78 L591.7,75.8" fill="none" stroke="#888" stroke-width="0.8"/><text x="234" y="79.8" font-size="10.5" fill="#444">A</text><path d="M241.5,72.5 l1,-1.5 l1,1.5 z" fill="#444"/><text x="251" y="79.8" font-size="8.8" fill="#444">A</text><path d="M257,72.3 l1,1.5 l1,-1.5 z" fill="#444"/><text x="94.4" y="99" font-size="10" font-weight="bold" fill="#444" text-anchor="middle">Ж</text><text x="112.8" y="99" font-size="10" font-style="italic" fill="#666" text-anchor="middle">К</text><text x="132.2" y="98" font-size="9.5" fill="#444" text-anchor="middle">Ч</text><line x1="129" y1="100" x2="135.5" y2="100" stroke="#444" stroke-width="0.9"/><path d="M148,92 H155 M151.5,92 V99.5 M147.5,95.8 H155.5" stroke="#444" stroke-width="1"/><text x="166" y="99" font-size="10" fill="#444">A</text><text x="173" y="100.5" font-size="6" fill="#444">2</text><path d="M179.8,94.3 L182,96.5 L184.2,94.3" fill="none" stroke="#888" stroke-width="0.8"/><path d="M193,99 L197,90.5 L201,99 M194.5,96 H199.5" fill="none" stroke="#444" stroke-width="1"/><rect x="191.8" y="99.8" width="10.2" height="1.9" fill="#e02020"/><path d="M205.8,94.3 L208,96.5 L210.2,94.3" fill="none" stroke="#888" stroke-width="0.8"/><path d="M219,95 L223,91 L227,95 L223,99 Z M221,90 L223,91.5" fill="none" stroke="#444" stroke-width="1"/><circle cx="227.5" cy="97.5" r="0.9" fill="#444"/><rect x="218.2" y="99.8" width="10.2" height="1.9" fill="#f7e600"/><path d="M232.8,94.3 L235,96.5 L237.2,94.3" fill="none" stroke="#888" stroke-width="0.8"/><rect x="245.5" y="91" width="9.5" height="9" fill="none" stroke="#444" stroke-width="1"/><path d="M250.25,92.5 V99 M247,95.5 H253.5" stroke="#bbb" stroke-width="0.6"/><path d="M258.8,94.3 L261,96.5 L263.2,94.3" fill="none" stroke="#888" stroke-width="0.8"/><path d="M286.5,72.5 H294 M286.5,74 H294 M290.25,74 V80.5" stroke="#444" stroke-width="1"/><path d="M309,76.2 H317 M313,71.5 V74.5 M313,78 V81 M311.5,73 L313,74.8 L314.5,73 M311.5,79.5 L313,77.6 L314.5,79.5" fill="none" stroke="#444" stroke-width="0.9"/><rect x="328.8" y="69" width="14.2" height="14" fill="#6d7581"/><path d="M332,79.5 H339.8 M332,81 H339.8 M335.9,72.5 V79.5" stroke="#f4f4f4" stroke-width="1"/><rect x="354.2" y="72" width="8.8" height="8.5" fill="none" stroke="#444" stroke-width="1"/><path d="M356,74.5 H360 M356,76.3 H361.3 M356,78.2 H359" stroke="#444" stroke-width="0.9"/><path d="M377.5,79.5 L385,72 M380,74 l2,-1.5 l1.5,2 M383,77 l2,2" fill="none" stroke="#444" stroke-width="1"/><path d="M391.3,75.3 L393.5,77.5 L395.7,75.3" fill="none" stroke="#888" stroke-width="0.8"/><line x1="286" y1="91.5" x2="294.5" y2="91.5" stroke="#444" stroke-width="1"/><line x1="286" y1="93.8" x2="291" y2="93.8" stroke="#444" stroke-width="1"/><line x1="286" y1="96.2" x2="294.5" y2="96.2" stroke="#444" stroke-width="1"/><line x1="286" y1="98.5" x2="291" y2="98.5" stroke="#444" stroke-width="1"/><line x1="308.8" y1="91.5" x2="317.3" y2="91.5" stroke="#444" stroke-width="1"/><line x1="310.6" y1="93.8" x2="315.5" y2="93.8" stroke="#444" stroke-width="1"/><line x1="308.8" y1="96.2" x2="317.3" y2="96.2" stroke="#444" stroke-width="1"/><line x1="310.6" y1="98.5" x2="315.5" y2="98.5" stroke="#444" stroke-width="1"/><line x1="331.6" y1="91.5" x2="340.1" y2="91.5" stroke="#444" stroke-width="1"/><line x1="335.1" y1="93.8" x2="340.1" y2="93.8" stroke="#444" stroke-width="1"/><line x1="331.6" y1="96.2" x2="340.1" y2="96.2" stroke="#444" stroke-width="1"/><line x1="335.1" y1="98.5" x2="340.1" y2="98.5" stroke="#444" stroke-width="1"/><line x1="354.4" y1="91.5" x2="362.9" y2="91.5" stroke="#444" stroke-width="1"/><line x1="354.4" y1="93.8" x2="362.9" y2="93.8" stroke="#444" stroke-width="1"/><line x1="354.4" y1="96.2" x2="362.9" y2="96.2" stroke="#444" stroke-width="1"/><line x1="354.4" y1="98.5" x2="362.9" y2="98.5" stroke="#444" stroke-width="1"/><rect x="377.2" y="91" width="9" height="9" fill="none" stroke="#444" stroke-width="1"/><path d="M377.2,93.8 H386.2 M377.2,97.2 H386.2 M379,95.5 H384.5" stroke="#444" stroke-width="0.8"/><path d="M391.3,94.3 L393.5,96.5 L395.7,94.3" fill="none" stroke="#888" stroke-width="0.8"/><path d="M426.5,72.5 H418.5 L423,76.5 L418.5,80.5 H426.5" fill="none" stroke="#444" stroke-width="1"/><path d="M431.8,75.3 L434,77.5 L436.2,75.3" fill="none" stroke="#888" stroke-width="0.8"/><path d="M419,95.5 L421.5,92 H428 V99 H421.5 Z" fill="none" stroke="#444" stroke-width="1"/><rect x="422.5" y="94.5" width="1.5" height="2" fill="#444"/><rect x="425" y="94.5" width="1.5" height="2" fill="#999"/><path d="M431.8,94.3 L434,96.5 L436.2,94.3" fill="none" stroke="#888" stroke-width="0.8"/><text x="457.5" y="76" font-size="5.5" font-weight="bold" fill="#444">A</text><text x="457.5" y="81" font-size="5.5" font-weight="bold" fill="#444">Я</text><path d="M466,71.5 V80.5 M464.2,78.5 L466,80.5 L467.8,78.5" fill="none" stroke="#444" stroke-width="0.9"/><text x="481" y="76" font-size="5.5" font-weight="bold" fill="#444">Я</text><text x="481" y="81" font-size="5.5" font-weight="bold" fill="#444">A</text><path d="M489.5,71.5 V80.5 M487.7,78.5 L489.5,80.5 L491.3,78.5" fill="none" stroke="#444" stroke-width="0.9"/><path d="M458.5,91 H467.5 L464,95 V99.5 L462,98.5 V95 Z" fill="#444"/><path d="M481.5,91 H490.5 L487,95 V99.5 L485,98.5 V95 Z" fill="#aaa"/><path d="M489,97.5 l2,2 m0,-2 l-2,2" stroke="#aaa" stroke-width="0.7"/><text x="519" y="99.5" font-size="10" fill="#444" text-anchor="middle">%</text><rect x="536.8" y="92" width="10" height="7" fill="none" stroke="#444" stroke-width="1"/><rect x="538.5" y="93.5" width="6.5" height="4" fill="#444"/><circle cx="541.8" cy="95.5" r="1.2" fill="#fff"/><path d="M550.8,94.3 L553,96.5 L555.2,94.3" fill="none" stroke="#888" stroke-width="0.8"/><text x="565.5" y="95" font-size="5.5" fill="#444">.0</text><path d="M561,98 H568.5 M562.5,96.6 L561,98 L562.5,99.4" fill="none" stroke="#444" stroke-width="0.9"/><text x="583" y="95" font-size="5.5" fill="#444">.00</text><path d="M583,98 H591 M589.5,96.6 L591,98 L589.5,99.4" fill="none" stroke="#444" stroke-width="0.9"/><rect x="617" y="74.5" width="8" height="6.5" fill="none" stroke="#444" stroke-width="0.9"/><path d="M617,76.7 H625 M617,78.9 H625 M619.7,74.5 V81.0 M622.4,74.5 V81.0" stroke="#444" stroke-width="0.7"/><path d="M614.5,72.5 H617.5 M616,71.0 V74.0" stroke="#444" stroke-width="0.8"/><rect x="617" y="93.5" width="8" height="6.5" fill="none" stroke="#444" stroke-width="0.9"/><path d="M617,95.7 H625 M617,97.9 H625 M619.7,93.5 V100.0 M622.4,93.5 V100.0" stroke="#444" stroke-width="0.7"/><path d="M614.5,91.5 H617.5" stroke="#444" stroke-width="0.8"/><path d="M629.3,75.3 L631.5,77.5 L633.7,75.3" fill="none" stroke="#888" stroke-width="0.8"/><path d="M629.3,94.3 L631.5,96.5 L633.7,94.3" fill="none" stroke="#888" stroke-width="0.8"/><path d="M655.5,78.5 L661,73 L664.5,76.5 L660.5,80.5 H657.5 Z M658,76 L661.5,79.5" fill="none" stroke="#444" stroke-width="0.9"/><path d="M670.3,75.3 L672.5,77.5 L674.7,75.3" fill="none" stroke="#888" stroke-width="0.8"/><rect x="678.5" y="72" width="9" height="8.5" fill="none" stroke="#444" stroke-width="1"/><rect x="679" y="72.5" width="4" height="4" fill="#444"/><rect x="683" y="76.5" width="4" height="3.5" fill="#999"/><path d="M693.3,75.3 L695.5,77.5 L697.7,75.3" fill="none" stroke="#888" stroke-width="0.8"/><rect x="657.5" y="91" width="8" height="3.5" fill="none" stroke="#444" stroke-width="1"/><path d="M665.5,92.8 H667 V95.5 H661.8 V97" fill="none" stroke="#444" stroke-width="0.9"/><rect x="661" y="97" width="1.8" height="3" fill="#444"/><rect x="680" y="91.5" width="9" height="7.5" fill="none" stroke="#444" stroke-width="1"/><path d="M680,94 H689 M680,96.5 H689 M683,91.5 V99 M686,91.5 V99" stroke="#444" stroke-width="0.7"/><path d="M693.3,94.3 L695.5,96.5 L697.7,94.3" fill="none" stroke="#888" stroke-width="0.8"/><rect x="708.5" y="69.5" width="282" height="32" fill="#fff" stroke="#d4d4d4"/><rect x="709.5" y="70.5" width="85" height="30" fill="#fff" stroke="#6a6a6a" stroke-width="1.6"/><rect x="797.6" y="72" width="82.5" height="27" fill="#ffeb9c"/><line x1="969.7" y1="70" x2="969.7" y2="101" stroke="#dedede"/><path d="M976.5,83.5 L980,87 L983.5,83.5" fill="none" stroke="#999" stroke-width="0.9"/></svg>
<div class="t " style="left:90px;top:73.56px;font-size:8.2px;line-height:8.2px;color:#444;">Calibri</div>
<div class="t " style="left:200.5px;top:73.35px;font-size:8.8px;line-height:8.8px;color:#444;transform:scaleX(0.8205);transform-origin:0 0;">11</div>
<div class="t " style="left:515px;top:73.35px;font-size:8.8px;line-height:8.8px;color:#444;transform:scaleX(0.8635);transform-origin:0 0;">Общий</div>
<div class="t " style="left:713.5px;top:80.96px;font-size:9.5px;line-height:9.5px;color:#111;transform:scaleX(1.0714);transform-origin:0 0;">Обычный</div>
<div class="t " style="left:801px;top:80.96px;font-size:9.5px;line-height:9.5px;color:#9c6500;transform:scaleX(1.029);transform-origin:0 0;">Нейтральный</div>
<div class="t " style="left:77.5px;top:113.72px;font-size:8.6px;line-height:8.6px;color:#444;transform:scaleX(1.2967);transform-origin:0 0;">I30</div>
<svg class="a" style="left:0;top:108" width="1000" height="20"><path d="M141.2,9.8 L143,11.6 L144.8,9.8" fill="none" stroke="#888" stroke-width="0.8"/><text x="150" y="13" font-family="Liberation Serif" font-style="italic" font-size="10" fill="#555">fx</text><path d="M963,9.5 L965,11.5 L967,9.5" fill="none" stroke="#aaa" stroke-width="0.8"/></svg>
<svg class="a" style="left:0;top:0" width="45" height="562" font-family="Liberation Sans"><polygon points="16.7,9.6 22.4,8.9 22.4,14.3 16.7,14.3" fill="#fff"/><polygon points="23.2,8.8 29,8.1 29,14.3 23.2,14.3" fill="#fff"/><polygon points="16.7,15 22.4,15 22.4,20.4 16.7,19.8" fill="#fff"/><polygon points="23.2,15 29,15 29,21.2 23.2,20.5" fill="#fff"/><circle cx="24.3" cy="41.5" r="3.7" fill="none" stroke="#fff" stroke-width="1.1"/><line x1="21.6" y1="44.3" x2="17" y2="49.4" stroke="#fff" stroke-width="1.1"/><circle cx="22.6" cy="73.1" r="5" fill="none" stroke="#fff" stroke-width="1.5"/><rect x="0" y="93" width="2.5" height="28" fill="#76b3e6"/><rect x="0" y="126.8" width="2.5" height="27.60000000000001" fill="#76b3e6"/><rect x="0" y="161.5" width="2.5" height="27.5" fill="#76b3e6"/><rect x="0" y="196" width="2.5" height="28" fill="#76b3e6"/><rect x="0" y="231" width="2.5" height="27" fill="#76b3e6"/><rect x="0" y="265.5" width="2.5" height="27.5" fill="#76b3e6"/><rect x="0" y="300" width="2.5" height="28" fill="#76b3e6"/><rect x="0" y="334" width="2.5" height="28" fill="#76b3e6"/><rect x="0" y="330" width="45" height="34" fill="#45474b"/><rect x="0" y="334" width="2.5" height="28" fill="#76b3e6"/><path d="M14.5,101 H20 L21.5,102.5 H30.3 V113.5 H14.5 Z" fill="#f6d56a"/><rect x="14.5" y="104" width="15.8" height="9.5" fill="#fbe08a"/><path d="M17.5,113.5 V108 H27.5 V113.5 H25 V110.5 H20 V113.5 Z" fill="#3b8ed8"/><circle cx="22.8" cy="141" r="7.6" fill="#fff"/><circle cx="22.8" cy="141" r="6.3" fill="#2cb742"/><path d="M16,148.5 L17.5,144 L20,147 Z" fill="#fff"/><path d="M20,137.5 C20.5,141.5 22.5,143.8 26,144.5 L26.5,143 L24.5,142 L23.5,143 C22.5,142.3 21.5,141 21.2,140 L22,139 L21,137 Z" fill="#fff"/><circle cx="22.8" cy="175.7" r="7.8" fill="#1f5fc8"/><circle cx="24" cy="174.5" r="6" fill="#5a9ae8"/><path d="M15.5,173.5 L22,177 L28.5,172.5 V180 H17 Z" fill="#fff"/><path d="M15.5,173.5 L22,177 L28.5,172.5" fill="none" stroke="#c9d6ef" stroke-width="0.6"/><circle cx="22.8" cy="210" r="7.8" fill="#db4437"/><path d="M22.8,210 L16,206.1 A7.8,7.8 0 0 0 19,216.8 Z" fill="#0f9d58"/><path d="M22.8,210 L19,216.8 A7.8,7.8 0 0 0 30.6,210 Z" fill="#ffcd40"/><path d="M22.8,210 L16,206.1 A7.8,7.8 0 0 0 15,210 Z" fill="#0f9d58"/><circle cx="22.8" cy="210" r="3.6" fill="#fff"/><circle cx="22.8" cy="210" r="2.8" fill="#4285f4"/><path d="M16.5,236 H28.5 V252 H16.5 Z" fill="#dfe8f4"/><rect x="16.5" y="236" width="12" height="3" fill="#a7c4e6"/><text x="17.5" y="249" font-size="9" fill="#e8742a" font-weight="bold">A</text><rect x="23.5" y="241" width="4" height="2" fill="#7aa6d8"/><ellipse cx="21.5" cy="279" rx="7.5" ry="5.8" fill="#f1e7d6"/><circle cx="18" cy="277.5" r="1.1" fill="#d33"/><circle cx="20.5" cy="275.5" r="1.1" fill="#3a3"/><circle cx="18.5" cy="280.5" r="1.1" fill="#36c"/><path d="M23,285 L29.5,271" stroke="#c98a2e" stroke-width="1.6"/><rect x="15.5" y="305.5" width="15" height="15" rx="2" fill="#2f7bf2"/><path d="M18.5,309.5 L20.5,316.5 L23,311 L25.5,316.5 L27.5,309.5" fill="none" stroke="#fff" stroke-width="1.3"/><polygon points="22.8,339.5 26.6,343.3 22.8,347.1 19,343.3" fill="#e8502b"/><polygon points="18.2,344.3 22,348.1 18.2,351.9 14.4,348.1" fill="#2c8be0"/><polygon points="27.4,344.3 31.2,348.1 27.4,351.9 23.6,348.1" fill="#3cae3c"/><path d="M30.5,380 L35,384 L30.5,388" fill="none" stroke="#ddd" stroke-width="1"/><circle cx="13" cy="401.5" r="3.5" fill="#ccc"/><circle cx="17" cy="401" r="3.2" fill="#bbb"/><rect x="14" y="402" width="6.5" height="4" rx="1" fill="#888"/><rect x="27" y="395.3" width="12" height="11.8" fill="#1a1a8c"/><text x="28" y="404.5" font-size="8.5" fill="#fff">Ru</text><circle cx="15.4" cy="418.6" r="6" fill="#d9272e"/><path d="M12.3,421 V416.3 L15.4,419 L18.5,416.3 V421" fill="none" stroke="#fff" stroke-width="1.3"/><path d="M28,422 A7,7 0 0 1 37,414 M30,422 A5,5 0 0 1 37,416.5 M32,422 A3,3 0 0 1 37,419" fill="none" stroke="#ccc" stroke-width="0.8"/><circle cx="36.5" cy="421.5" r="0.9" fill="#ccc"/><text x="15.2" y="439.3" font-size="8.5" fill="#f5d143" text-anchor="middle">59</text><rect x="28" y="430.5" width="11" height="7.5" fill="none" stroke="#eee" stroke-width="1"/><rect x="29.5" y="432" width="4" height="1.2" fill="#eee"/><circle cx="36.5" cy="438.5" r="3" fill="#2aa84a"/><path d="M10.5,451.5 H13 L16,448.5 V458.5 L13,455.5 H10.5 Z" fill="none" stroke="#ddd" stroke-width="0.9"/><path d="M18,451 Q19.5,453.5 18,456 M20,449.5 Q22.5,453.5 20,457.5" fill="none" stroke="#bbb" stroke-width="0.8"/><text x="22.5" y="478" font-size="9" fill="#fff" text-anchor="middle">РУС</text><text x="13.5" y="506" font-size="8.8" fill="#fff" textLength="19" lengthAdjust="spacingAndGlyphs">20:31</text><text x="3" y="519" font-size="8.8" fill="#fff" textLength="38.5" lengthAdjust="spacingAndGlyphs">22.03.2021</text><path d="M16.5,535 H28.5 V544 H21 L19,546.5 V544 H16.5 Z" fill="#fff"/><path d="M18.5,537.5 H26.5 M18.5,539.5 H26.5 M18.5,541.5 H23" stroke="#333" stroke-width="0.8"/><circle cx="26.5" cy="544" r="2.3" fill="#fff" stroke="#333" stroke-width="0.6"/><rect x="0" y="558" width="45" height="1" fill="#666"/></svg>
<svg class="a" style="left:45px;top:110px" width="30" height="100"><circle cx="14.3" cy="20.5" r="3.6" fill="none" stroke="#555" stroke-width="1"/><line x1="17" y1="23.2" x2="19.8" y2="26" stroke="#555" stroke-width="1.1"/><path d="M9,46 H20 V53 H13.5 L11.5,55 V53 H9 Z" fill="none" stroke="#555" stroke-width="0.9"/><path d="M11,48.3 H18 M11,50.5 H16" stroke="#555" stroke-width="0.7"/><rect x="15.5" y="51.5" width="6.5" height="4.5" rx="1" fill="#f2c500"/><path d="M16.8,53 H20.8 M16.8,54.5 H20.8" stroke="#333" stroke-width="0.5"/><text x="8.5" y="81" font-size="6" font-weight="bold" fill="#555">ABC</text><path d="M16,81 L18,83.5 L21.5,79.5" fill="none" stroke="#555" stroke-width="0.9"/></svg>
<svg class="a" style="left:75px;top:128px" width="19" height="14"><polygon points="16,3 16,12 6,12" fill="#d0d0d0"/></svg>
<svg class="a" style="left:971px;top:120px" width="29" height="300"><rect x="9.5" y="8" width="11.5" height="9" fill="#fff" stroke="#333" stroke-width="1"/><rect x="11.5" y="10" width="7.5" height="5" fill="#999" stroke="#333" stroke-width="0.6"/><rect x="9.5" y="37" width="11.5" height="9" fill="none" stroke="#999"/><path d="M9.5,40 H21 M9.5,43 H21 M13.3,37 V46 M17.1,37 V46" stroke="#999" stroke-width="0.7"/><rect x="9.5" y="63" width="6" height="6" fill="none" stroke="#999"/><circle cx="17" cy="70" r="3.6" fill="#f1f1f1" stroke="#999"/><rect x="9.5" y="90" width="11" height="10" fill="none" stroke="#999"/><path d="M10,98.5 L13.5,94.5 L16,97 L18,95 L20.5,98" fill="none" stroke="#999" stroke-width="0.8"/><path d="M10,128.5 V126 H12 V128.5 Z M13.5,128.5 V122 H15.5 V128.5 Z M17.5,128.5 V118.5 H19.5 V128.5 Z" fill="none" stroke="#999" stroke-width="0.8"/><text x="15" y="156" font-size="9.5" fill="#999" text-anchor="middle">¶</text><text x="15" y="181" font-size="8.5" fill="#999" text-anchor="middle">Ta</text><path d="M11,185 Q15,182 19,185" fill="none" stroke="#999" stroke-width="0.7"/><rect x="9.5" y="202" width="3" height="3" fill="none" stroke="#999" stroke-width="0.8"/><rect x="9.5" y="209" width="3" height="3" fill="none" stroke="#999" stroke-width="0.8"/><path d="M15,203.5 H20 V211 H16 M17.5,209.5 L16,211 L17.5,212.5" fill="none" stroke="#999" stroke-width="0.8"/><path d="M9.5,228.5 H20.5 V236 H9.5 Z M11.5,231 H18 M11.5,233.5 H16" fill="none" stroke="#999" stroke-width="0.8"/><path d="M15,236.5 H21.5 L19,239 V242 L17.5,241 V239 Z" fill="#999"/></svg>
<div class="a" style="left:960.5px;top:128px;width:10.5px;height:404px;background:#f1f1f1;border-left:1px solid #dedede"></div>
<div class="a" style="left:960.8px;top:130px;width:9px;height:8.7px;background:#fafafa;border:1px solid #d8d8d8"></div>
<div class="a" style="left:960.8px;top:523.6px;width:9px;height:8.5px;background:#fafafa;border:1px solid #d8d8d8"></div>
<div class="a" style="left:961px;top:154px;width:9px;height:361.6px;background:#f4f4f4;border:1px solid #d0d0d0"></div>
<svg class="a" style="left:960px;top:128px" width="11" height="410"><path d="M3,8.5 L5,6 L7,8.5 Z" fill="#bbb"/><path d="M3,399 L5,401.5 L7,399 Z" fill="#bbb"/><path d="M3,205 H7 M3,207 H7 M3,209 H7" stroke="#bbb" stroke-width="0.6"/></svg>
<div class="a" style="left:75px;top:532px;width:886px;height:11px;background:#f1f1f1"></div>
<div class="a" style="left:74.4px;top:532.5px;width:10.4px;height:10px;background:#fafafa;border:1px solid #d8d8d8"></div>
<div class="a" style="left:950.5px;top:532.5px;width:9px;height:10px;background:#fafafa;border:1px solid #d8d8d8"></div>
<div class="a" style="left:92.8px;top:532.6px;width:857px;height:10px;background:#f2f2f2;border:1px solid #d8d8d8;border-top-color:#e4e4e4"></div>
<svg class="a" style="left:0;top:530px" width="1000" height="15"><path d="M81,5.5 L78.5,7.5 L81,9.5 Z" fill="#bbb"/><path d="M954,5.5 L956.5,7.5 L954,9.5 Z" fill="#bbb"/><path d="M516.5,6 V10 M519,6 V10 M521.5,6 V10 M524,6 V10" stroke="#c8c8c8" stroke-width="0.9"/></svg>
<svg class="a" style="left:0;top:543px" width="1000" height="19"><path d="M58,6 V14 M64.5,6 L59.5,10 L64.5,14 Z" fill="#aaa" stroke="#aaa" stroke-width="0.8"/><path d="M81,6 L76,10 L81,14 Z" fill="#aaa"/><path d="M93,6 L98,10 L93,14 Z" fill="#aaa"/><path d="M110,6 L115,10 L110,14 Z M116,6 V14" fill="#aaa" stroke="#aaa" stroke-width="0.8"/><line x1="129.6" y1="1" x2="129.6" y2="19" stroke="#d8d8d8"/><path d="M138.5,10.5 H147.5 M143,6 V15" stroke="#555" stroke-width="1.1"/><rect x="156.5" y="1" width="102.7" height="18" fill="#fff"/><rect x="156.5" y="0.5" width="102.7" height="2.5" fill="#2fa84f"/><rect x="259.2" y="1" width="140.4" height="18" fill="#ececec" stroke="#d8d8d8" stroke-width="0.8"/><rect x="259.2" y="0.5" width="140.4" height="2.5" fill="#1e6b32"/><path d="M895.5,10.5 H903.5 M972,10.5 H982 M977,5.5 V15.5" stroke="#444" stroke-width="0.9"/></svg>
<div class="t " style="left:163px;top:549.22px;font-size:8.6px;line-height:8.6px;color:#222;font-weight:bold;transform:scaleX(0.9509);transform-origin:0 0;">Базовый функционал</div>
<div class="t " style="left:271px;top:549.22px;font-size:8.6px;line-height:8.6px;color:#8a8a8a;transform:scaleX(0.9477);transform-origin:0 0;">Дополнительные возможности</div>
<div class="t " style="left:908.8px;top:549.22px;font-size:8.6px;line-height:8.6px;color:#444;font-weight:bold;transform:scaleX(0.9289);transform-origin:0 0;">Масштаб 100%</div>
<div class="a" style="left:670px;top:516.6px;width:49px;height:16px;border:1.6px solid #3d6e4e"></div>
<div class="a" style="left:716px;top:530.2px;width:3.8px;height:3.6px;background:#3d6e4e;outline:0.6px solid #fff"></div>
</body></html>
